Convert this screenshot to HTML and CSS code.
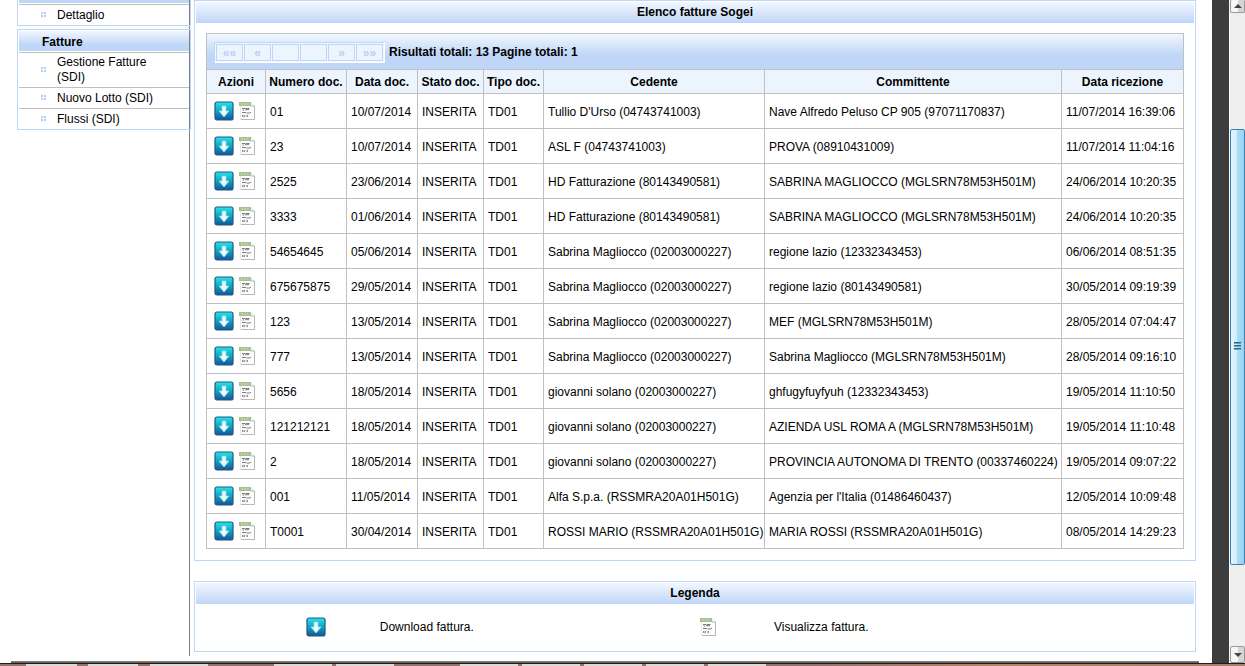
FILE: index.html
```html
<!DOCTYPE html>
<html lang="it">
<head>
<meta charset="utf-8">
<title>Elenco fatture Sogei</title>
<link rel="stylesheet" href="styles.css">
</head>
<body>
<svg class="defs" aria-hidden="true">
  <defs>
    <linearGradient id="blue" x1="0" y1="0" x2="0" y2="1">
      <stop offset="0" stop-color="#25e3ea"/>
      <stop offset=".45" stop-color="#16a9c6"/>
      <stop offset="1" stop-color="#14549a"/>
    </linearGradient>
    <symbol id="download" viewBox="0 0 20 20">
      <rect x="1" y="1" width="18" height="18" rx="2" fill="url(#blue)" stroke="#1c5a80" stroke-width="1.200"/>
      <path d="M8 5h4v5h3l-5 6-5-6h3z" fill="#e8fbfd" stroke="#8ddbea" stroke-width=".8"/>
    </symbol>
    <symbol id="doc" viewBox="0 0 17 20">
      <path d="M1.500 1.500h10.500l3.500 3.500v13.500h-14z" fill="#fdfdfd" stroke="#e8e8e8"/>
      <path d="M2 18.500h13.500V5" fill="none" stroke="#b8b8b8"/>
      <path d="M11.500 1v4h4" fill="#f2f2f2" stroke="#a9b3a2" stroke-width=".9"/>
      <path d="M0 1h11v4H0z" fill="#a6c08f"/>
      <path d="M2 3h2M5 3h2M8 3h1.500" stroke="#d3e2c6"/>
      <path d="M3 7.500h3M6.500 7.500h4M3.500 9h1.500M6 8.700h4M3 11.500h4M7.500 12h3l1.500-.8M3 15l1.500-.8M3 15l1.500.8M5 16l1-2M7.500 14.200l1.500.8-1.500.8" fill="none" stroke="#6c6c6c" stroke-width=".9"/>
    </symbol>
  </defs>
</svg>

<div class="window">
  <div class="page">
    <div class="columns">
      <nav class="sidebar">
        <section class="menu">
          <div class="menu-edge"></div>
          <a class="menu-item" href="#"><i class="dots"></i>Dettaglio</a>
        </section>
        <section class="menu">
          <h2 class="menu-title">Fatture</h2>
          <a class="menu-item" href="#"><i class="dots"></i>Gestione Fatture (SDI)</a>
          <a class="menu-item" href="#"><i class="dots"></i>Nuovo Lotto (SDI)</a>
          <a class="menu-item" href="#"><i class="dots"></i>Flussi (SDI)</a>
        </section>
      </nav>

      <main class="content">
        <section class="panel">
          <h1 class="panel-title">Elenco fatture Sogei</h1>
          <div class="list">
            <div class="toolbar">
              <div class="pager">
                <button class="page-button" disabled>««</button>
                <button class="page-button" disabled>«</button>
                <button class="page-button" disabled aria-label="Pagina precedente"></button>
                <button class="page-button" disabled aria-label="Pagina successiva"></button>
                <button class="page-button" disabled>»</button>
                <button class="page-button" disabled>»»</button>
              </div>
              <span>Risultati totali: 13 Pagine totali: 1</span>
            </div>
            <table class="invoices">
              <colgroup><col class="c-actions"><col class="c-number"><col class="c-date"><col class="c-state"><col class="c-type"><col class="c-seller"><col><col class="c-received"></colgroup>
              <thead>
                <tr><th>Azioni</th><th>Numero doc.</th><th>Data doc.</th><th>Stato doc.</th><th>Tipo doc.</th><th>Cedente</th><th>Committente</th><th>Data ricezione</th></tr>
              </thead>
              <tbody>
                <tr><td><div class="actions"><svg class="download"><use href="#download"/></svg><svg class="doc"><use href="#doc"/></svg></div></td><td>01</td><td>10/07/2014</td><td>INSERITA</td><td>TD01</td><td>Tullio D'Urso (04743741003)</td><td>Nave Alfredo Peluso CP 905 (97071170837)</td><td>11/07/2014 16:39:06</td></tr>
                <tr><td><div class="actions"><svg class="download"><use href="#download"/></svg><svg class="doc"><use href="#doc"/></svg></div></td><td>23</td><td>10/07/2014</td><td>INSERITA</td><td>TD01</td><td>ASL F (04743741003)</td><td>PROVA (08910431009)</td><td>11/07/2014 11:04:16</td></tr>
                <tr><td><div class="actions"><svg class="download"><use href="#download"/></svg><svg class="doc"><use href="#doc"/></svg></div></td><td>2525</td><td>23/06/2014</td><td>INSERITA</td><td>TD01</td><td>HD Fatturazione (80143490581)</td><td>SABRINA MAGLIOCCO (MGLSRN78M53H501M)</td><td>24/06/2014 10:20:35</td></tr>
                <tr><td><div class="actions"><svg class="download"><use href="#download"/></svg><svg class="doc"><use href="#doc"/></svg></div></td><td>3333</td><td>01/06/2014</td><td>INSERITA</td><td>TD01</td><td>HD Fatturazione (80143490581)</td><td>SABRINA MAGLIOCCO (MGLSRN78M53H501M)</td><td>24/06/2014 10:20:35</td></tr>
                <tr><td><div class="actions"><svg class="download"><use href="#download"/></svg><svg class="doc"><use href="#doc"/></svg></div></td><td>54654645</td><td>05/06/2014</td><td>INSERITA</td><td>TD01</td><td>Sabrina Magliocco (02003000227)</td><td>regione lazio (12332343453)</td><td>06/06/2014 08:51:35</td></tr>
                <tr><td><div class="actions"><svg class="download"><use href="#download"/></svg><svg class="doc"><use href="#doc"/></svg></div></td><td>675675875</td><td>29/05/2014</td><td>INSERITA</td><td>TD01</td><td>Sabrina Magliocco (02003000227)</td><td>regione lazio (80143490581)</td><td>30/05/2014 09:19:39</td></tr>
                <tr><td><div class="actions"><svg class="download"><use href="#download"/></svg><svg class="doc"><use href="#doc"/></svg></div></td><td>123</td><td>13/05/2014</td><td>INSERITA</td><td>TD01</td><td>Sabrina Magliocco (02003000227)</td><td>MEF (MGLSRN78M53H501M)</td><td>28/05/2014 07:04:47</td></tr>
                <tr><td><div class="actions"><svg class="download"><use href="#download"/></svg><svg class="doc"><use href="#doc"/></svg></div></td><td>777</td><td>13/05/2014</td><td>INSERITA</td><td>TD01</td><td>Sabrina Magliocco (02003000227)</td><td>Sabrina Magliocco (MGLSRN78M53H501M)</td><td>28/05/2014 09:16:10</td></tr>
                <tr><td><div class="actions"><svg class="download"><use href="#download"/></svg><svg class="doc"><use href="#doc"/></svg></div></td><td>5656</td><td>18/05/2014</td><td>INSERITA</td><td>TD01</td><td>giovanni solano (02003000227)</td><td>ghfugyfuyfyuh (12332343453)</td><td>19/05/2014 11:10:50</td></tr>
                <tr><td><div class="actions"><svg class="download"><use href="#download"/></svg><svg class="doc"><use href="#doc"/></svg></div></td><td>121212121</td><td>18/05/2014</td><td>INSERITA</td><td>TD01</td><td>giovanni solano (02003000227)</td><td>AZIENDA USL ROMA A (MGLSRN78M53H501M)</td><td>19/05/2014 11:10:48</td></tr>
                <tr><td><div class="actions"><svg class="download"><use href="#download"/></svg><svg class="doc"><use href="#doc"/></svg></div></td><td>2</td><td>18/05/2014</td><td>INSERITA</td><td>TD01</td><td>giovanni solano (02003000227)</td><td>PROVINCIA AUTONOMA DI TRENTO (00337460224)</td><td>19/05/2014 09:07:22</td></tr>
                <tr><td><div class="actions"><svg class="download"><use href="#download"/></svg><svg class="doc"><use href="#doc"/></svg></div></td><td>001</td><td>11/05/2014</td><td>INSERITA</td><td>TD01</td><td>Alfa S.p.a. (RSSMRA20A01H501G)</td><td>Agenzia per l'Italia (01486460437)</td><td>12/05/2014 10:09:48</td></tr>
                <tr><td><div class="actions"><svg class="download"><use href="#download"/></svg><svg class="doc"><use href="#doc"/></svg></div></td><td>T0001</td><td>30/04/2014</td><td>INSERITA</td><td>TD01</td><td>ROSSI MARIO (RSSMRA20A01H501G)</td><td>MARIA ROSSI (RSSMRA20A01H501G)</td><td>08/05/2014 14:29:23</td></tr>
              </tbody>
            </table>
          </div>
        </section>

        <section class="panel">
          <h2 class="panel-title">Legenda</h2>
          <div class="legend">
            <div class="legend-entry"><span class="legend-icon"><svg class="download"><use href="#download"/></svg></span>Download fattura.</div>
            <div class="legend-entry"><span class="legend-icon"><svg class="doc"><use href="#doc"/></svg></span>Visualizza fattura.</div>
          </div>
        </section>
      </main>
    </div>
    <div class="page-end"></div>
  </div>
  <div class="backdrop"></div>
  <div class="scrollbar">
    <button class="scroll-button scroll-up" aria-label="Su"><svg width="8" height="4" viewBox="0 0 8 4"><path d="M4 0l4 4H0z" fill="#444"/></svg></button>
    <div class="gap-above"></div>
    <div class="thumb"><svg width="8" height="9" viewBox="0 0 8 9" shape-rendering="crispEdges"><path d="M0 .5h7M0 3.500h7M0 6.500h7" stroke="#2c6484"/><path d="M0 1.500h7M0 4.500h7M0 7.500h7" stroke="#6ba6c2"/></svg></div>
    <div class="gap-below"></div>
    <button class="scroll-button" aria-label="Giù"><svg width="8" height="4" viewBox="0 0 8 4"><path d="M0 0h8L4 4z" fill="#444"/></svg></button>
  </div>
</div>
<div class="taskbar">
  <svg class="tabs" viewBox="0 0 1245 2" preserveAspectRatio="none"><path d="M26 0h51v2H26zM88 0h50v2H88zM150 0h58v2h-58zM274 0h58v2h-58zM336 0h58v2h-58zM460 0h58v2h-58zM522 0h58v2h-58zM584 0h58v2h-58zM646 0h58v2h-58zM708 0h58v2h-58z" fill="#e0d8d3"/></svg>
</div>
</body>
</html>
```
FILE: styles.css
```css
* { box-sizing: border-box; }

body {
  margin: 0;
  height: 100vh;
  display: flex;
  flex-direction: column;
  overflow: hidden;
  background: #fff;
  color: #000;
  font: 12px/15px "Liberation Sans", Arial, sans-serif;
}

h1, h2 { margin: 0; font-size: 12px; }
svg { display: block; }
.defs { position: absolute; width: 0; height: 0; }

.window { flex: 1; min-height: 0; display: flex; }
.page { flex: 1; min-width: 0; display: flex; flex-direction: column; }
.columns { flex: 1; min-height: 0; display: flex; margin-bottom: 5px; }

/* Side menu */
.sidebar {
  flex: none;
  width: 190px;
  padding-left: 17px;
  border-right: 1px solid #808080;
}
.menu {
  margin: 0 -2px 3px 0;
  padding: 1px 1px 0;
  border: 1px solid #bed6f8;
}
.menu:first-child { padding-top: 0; border-top: 0; }
.menu-edge { height: 3px; margin-bottom: 1px; background: #bed6f8; }
.menu-title {
  height: 20px;
  margin-bottom: 1px;
  padding-left: 23px;
  line-height: 22px;
  background: linear-gradient(#f2f7fe, #bfd6f8 70%);
}
.menu-item {
  display: flex;
  align-items: center;
  gap: 11px;
  min-height: 21px;
  padding: 2px 20px 2px 22px;
  border-top: 1px solid #c0c0c0;
  color: #000;
  text-decoration: none;
}
.dots {
  flex: none;
  width: 5px;
  height: 5px;
  margin-bottom: 2px;
  background:
    linear-gradient(#fff, #fff) 2px 0 / 1px 5px no-repeat,
    linear-gradient(#fff, #fff) 0 2px / 5px 1px no-repeat,
    #b4cff6;
}

/* Panels */
.content { flex: 1; min-width: 0; padding: 0 16px 0 4px; }
.panel { margin-bottom: 20px; padding: 1px; border: 1px solid #bed6f8; }
.panel-title {
  height: 21px;
  line-height: 21px;
  text-align: center;
  background: linear-gradient(#f2f7fe, #bfd6f8);
}

.list { margin: 10px 10px; border: 1px solid #c0c0c0; }
.toolbar {
  display: flex;
  align-items: center;
  gap: 4px;
  height: 35px;
  padding: 1px 0 0 7px;
  font-weight: bold;
  background: linear-gradient(#f2f7fe, #bfd6f8 60%);
}
.pager {
  display: flex;
  gap: 1px;
  padding: 1px;
  border: 1px solid;
  border-color: #bed6f8 #fff #fff #bed6f8;
  background: #f2f7fe;
}
.page-button {
  width: 27px;
  height: 17px;
  padding: 2px 0 0;
  border: 1px solid #bed6f8;
  background: #ecf4fe;
  color: #b5d0f5;
  font: bold 12px/13px "Liberation Sans", Arial, sans-serif;
}

.invoices {
  width: 100%;
  table-layout: fixed;
  border-collapse: separate;
  border-spacing: 0;
  white-space: nowrap;
}
.c-actions { width: 59px; }
.c-number { width: 81px; }
.c-date { width: 71px; }
.c-state { width: 66px; }
.c-type { width: 60px; }
.c-seller { width: 221px; }
.c-received { width: 121px; }
.invoices th, .invoices td {
  padding: 2px 0 0 4px;
  border-top: 1px solid #c0c0c0;
  border-right: 1px solid #c0c0c0;
}
.invoices th:last-child, .invoices td:last-child { border-right: 0; }
.invoices th { height: 24px; padding: 2px 0 0; background: #ecf4fe; }
.invoices td { height: 35px; }
.invoices td:first-child { padding-top: 0; }
.actions { display: flex; align-items: center; gap: 5px; padding-left: 3px; }
.download { width: 20px; height: 20px; }
.doc { width: 17px; height: 20px; }

.legend { display: flex; padding: 13px 10% 13px 11%; }
.legend-entry { flex: 1; display: flex; align-items: center; }
.legend-icon { width: 74px; }

.page-end { height: 2px; margin: 0 13px 0 11px; background: linear-gradient(#888a86, #555); }

/* Window frame */
.backdrop { flex: none; width: 17px; background: #3d3d3d; }
.scrollbar {
  flex: none;
  width: 16px;
  display: flex;
  flex-direction: column;
  background: #efefef;
  border-left: 1px solid #fafafa;
}
.scroll-button {
  flex: none;
  display: flex;
  align-items: center;
  justify-content: center;
  height: 17px;
  padding: 0;
  border: 1px solid #979797;
  border-radius: 2px;
  background: linear-gradient(90deg, #f7f7f7 50%, #d5d5d8 55%);
}
.scroll-up { height: 13px; border-top: 0; }
.gap-above { flex: 116; }
.thumb {
  flex: 436;
  display: flex;
  align-items: center;
  justify-content: center;
  border: 1px solid #3c7fb1;
  border-radius: 2px;
  background: linear-gradient(90deg, #e3f4fc, #d2edfa 45%, #a9dbf5 50%, #9cd3f1);
}
.gap-below { flex: 81; }
.taskbar {
  flex: none;
  height: 3px;
  border-top: 1px solid #241a18;
  background: linear-gradient(90deg, #94736c 65%, #b98262 80%, #a87e6c);
}
.tabs { width: 100%; height: 2px; }
```
